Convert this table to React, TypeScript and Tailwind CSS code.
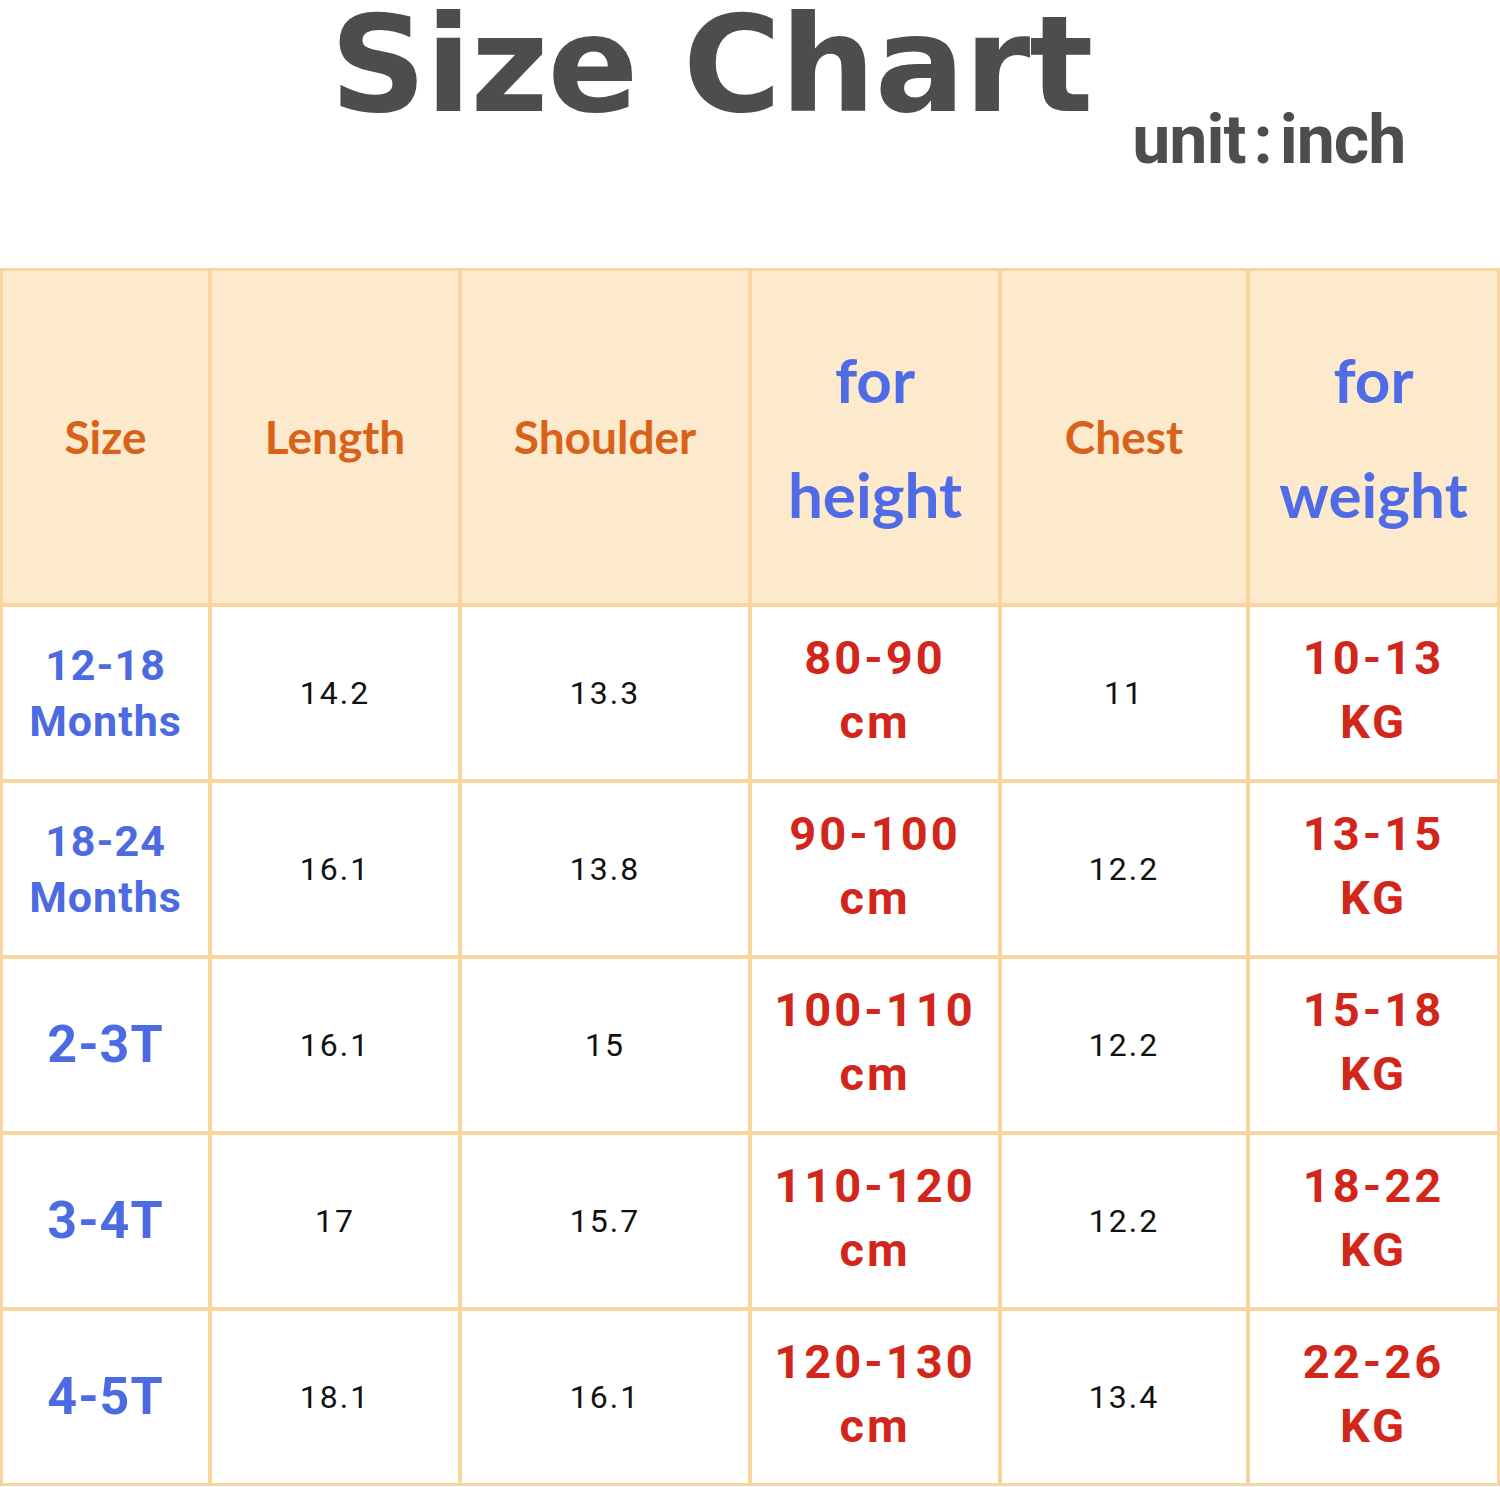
import React from 'react';

type Row = {
  size: string[];
  length: string;
  shoulder: string;
  height: string[];
  chest: string;
  weight: string[];
};

const rows: Row[] = [
  { size: ['12-18', 'Months'], length: '14.2', shoulder: '13.3', height: ['80-90', 'cm'], chest: '11', weight: ['10-13', 'KG'] },
  { size: ['18-24', 'Months'], length: '16.1', shoulder: '13.8', height: ['90-100', 'cm'], chest: '12.2', weight: ['13-15', 'KG'] },
  { size: ['2-3T'], length: '16.1', shoulder: '15', height: ['100-110', 'cm'], chest: '12.2', weight: ['15-18', 'KG'] },
  { size: ['3-4T'], length: '17', shoulder: '15.7', height: ['110-120', 'cm'], chest: '12.2', weight: ['18-22', 'KG'] },
  { size: ['4-5T'], length: '18.1', shoulder: '16.1', height: ['120-130', 'cm'], chest: '13.4', weight: ['22-26', 'KG'] },
];

const hand = "font-['Lato','Noto_Sans',sans-serif] font-bold";
const sans = "font-['Roboto','Liberation_Sans',sans-serif]";

const HeadCell: React.FC<{ lines: string[]; blue?: boolean }> = ({ lines, blue }) => (
  <div className="bg-[#fde9cc] flex flex-col items-center justify-center">
    {lines.map((l) => (
      <span
        key={l}
        className={
          blue
            ? `${hand} text-[62px] leading-[115px] text-[#4f6be6]`
            : `${hand} text-[46px] leading-[60px] text-[#d9621b]`
        }
      >
        {l}
      </span>
    ))}
  </div>
);

const PlainCell: React.FC<{ value: string }> = ({ value }) => (
  <div className="bg-white flex items-center justify-center">
    <span className={`${sans} text-[32px] tracking-[2px] text-[#111]`}>{value}</span>
  </div>
);

const RedCell: React.FC<{ lines: string[] }> = ({ lines }) => (
  <div className="bg-white flex flex-col items-center justify-center pb-[6px]">
    {lines.map((l) => (
      <span key={l} className={`${sans} font-bold text-[47px] leading-[64px] tracking-[3px] text-[#d2261b]`}>
        {l}
      </span>
    ))}
  </div>
);

const SizeCell: React.FC<{ lines: string[] }> = ({ lines }) => (
  <div className="bg-white flex flex-col items-center justify-center">
    {lines.length > 1 ? (
      lines.map((l) => (
        <span key={l} className={`${sans} font-bold text-[43px] leading-[56px] tracking-[1px] text-[#4c6be0]`}>
          {l}
        </span>
      ))
    ) : (
      <span className={`${sans} font-bold text-[52px] tracking-[1px] text-[#4c6be0]`}>{lines[0]}</span>
    )}
  </div>
);

export default function App() {
  return (
    <div className="w-[1500px] h-[1487px] bg-white overflow-hidden">
      {/* Title */}
      <div className="h-[268px] flex items-start pl-[330px]">
        <h1 className="font-['DejaVu_Sans',sans-serif] font-bold text-[134px] leading-[0.85] tracking-[-1px] text-[#4d4d4d] mt-[9px]">
          Size Chart
        </h1>
        <span className={`${sans} font-bold text-[68px] leading-none text-[#4d4d4d] ml-[40px] mt-[106px] tracking-[-1px]`}>
          unit<span className="mx-[8px]">:</span>inch
        </span>
      </div>

      {/* Table */}
      <div className="grid grid-cols-[205px_246px_286px_246px_244px_247px] grid-rows-[332px_repeat(5,172px)] gap-[4px] p-[3px] bg-[#f9d49e]">
        <HeadCell lines={['Size']} />
        <HeadCell lines={['Length']} />
        <HeadCell lines={['Shoulder']} />
        <HeadCell lines={['for', 'height']} blue />
        <HeadCell lines={['Chest']} />
        <HeadCell lines={['for', 'weight']} blue />

        {rows.map((r) => (
          <React.Fragment key={r.size.join(' ')}>
            <SizeCell lines={r.size} />
            <PlainCell value={r.length} />
            <PlainCell value={r.shoulder} />
            <RedCell lines={r.height} />
            <PlainCell value={r.chest} />
            <RedCell lines={r.weight} />
          </React.Fragment>
        ))}
      </div>
    </div>
  );
}
